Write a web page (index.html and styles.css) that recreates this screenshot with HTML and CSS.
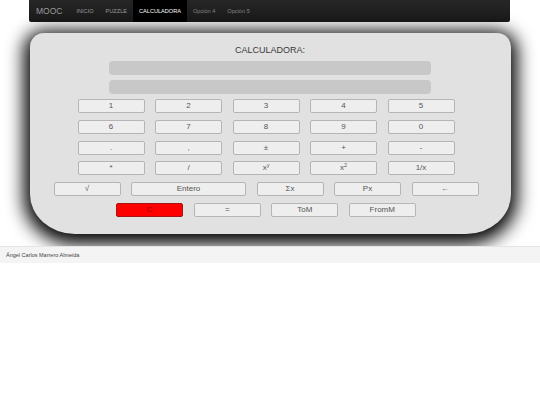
FILE: index.html
```html
<!DOCTYPE html>
<html lang="es">
<head>
<meta charset="utf-8">
<title>MOOC Calculadora</title>
<link rel="stylesheet" href="styles.css">
</head>
<body>
<nav class="navbar">
  <span class="brand">MOOC</span>
  <a class="nav-item">INICIO</a>
  <a class="nav-item">PUZZLE</a>
  <a class="nav-item active">CALCULADORA</a>
  <a class="nav-item opt">Opción 4</a>
  <a class="nav-item opt">Opción 5</a>
</nav>
<main class="panel">
  <h1 class="title">CALCULADORA:</h1>
  <div class="display"></div>
  <div class="display"></div>
  <div class="keys">
    <div class="row">
      <button class="key">1</button><button class="key">2</button><button class="key">3</button><button class="key">4</button><button class="key">5</button>
    </div>
    <div class="row">
      <button class="key">6</button><button class="key">7</button><button class="key">8</button><button class="key">9</button><button class="key">0</button>
    </div>
    <div class="row">
      <button class="key">.</button><button class="key">,</button><button class="key">±</button><button class="key">+</button><button class="key">-</button>
    </div>
    <div class="row">
      <button class="key">*</button><button class="key">/</button><button class="key">x<sup>y</sup></button><button class="key">x<sup>2</sup></button><button class="key">1/x</button>
    </div>
    <div class="row">
      <button class="key">√</button><button class="key wide">Entero</button><button class="key">Σx</button><button class="key">Px</button><button class="key">←</button>
    </div>
    <div class="row">
      <button class="key red">C</button><button class="key">=</button><button class="key">ToM</button><button class="key">FromM</button>
    </div>
  </div>
</main>
<footer class="footer">Ángel Carlos Marrero Almeida</footer>
</body>
</html>
```
FILE: styles.css
```css
html, body {
  margin: 0;
  padding: 0;
  background: #fff;
  font-family: "Liberation Sans", Arial, sans-serif;
  color: #333;
}
.navbar {
  margin: 0 30px 0 29px;
  height: 22px;
  background: linear-gradient(#262626, #1a1a1a);
  border-radius: 0 0 2px 2px;
  display: flex;
  align-items: stretch;
  padding-left: 7px;
}
.brand {
  color: #9a9a9a;
  font-size: 8.5px;
  line-height: 22px;
  margin-right: 8px;
}
.nav-item {
  color: #999;
  font-size: 5.6px;
  line-height: 22px;
  padding: 0 6px;
}
.nav-item.active {
  background: #000;
  color: #fff;
}
.nav-item.opt {
  color: #858585;
}
.panel {
  margin: 11px 29px 0 30px;
  height: 201px;
  box-sizing: border-box;
  background: #e1e1e1;
  border-radius: 14px 14px 45px 45px / 14px 14px 40px 40px;
  box-shadow: 0 4px 18px 6px #000;
  padding-top: 12px;
  display: flex;
  flex-direction: column;
  align-items: center;
}
.title {
  margin: 0 0 5px;
  font-size: 9px;
  font-weight: 400;
  line-height: 11px;
  color: #3a3a3a;
  padding-right: 1px;
}
.display {
  width: 322px;
  height: 14px;
  background: #c8c8c8;
  border-radius: 4px;
  margin-bottom: 5px;
  margin-right: 1px;
}
.keys {
  display: flex;
  flex-direction: column;
  align-items: center;
  gap: 6.8px;
  padding-right: 9px;
}
.row {
  display: flex;
  gap: 10.5px;
}
.key {
  width: 67px;
  height: 14px;
  box-sizing: border-box;
  margin: 0;
  padding: 0;
  background: #eeeeee;
  border: 1px solid #b5b5b5;
  border-radius: 2px;
  font-family: "Liberation Sans", Arial, sans-serif;
  font-size: 8px;
  font-weight: 400;
  line-height: 12px;
  color: #555;
}
.key sup {
  font-size: 5.5px;
  line-height: 0;
  vertical-align: 3px;
}
.key.wide {
  width: 115px;
}
.key.red {
  background: #ff0000;
  border-color: #a31515;
  color: #900000;
}
.footer {
  margin-top: 12px;
  height: 16px;
  background: #f4f4f4;
  border-top: 1px solid #e4e4e4;
  font-size: 5.5px;
  line-height: 16px;
  padding-left: 6px;
  color: #444;
}
```
